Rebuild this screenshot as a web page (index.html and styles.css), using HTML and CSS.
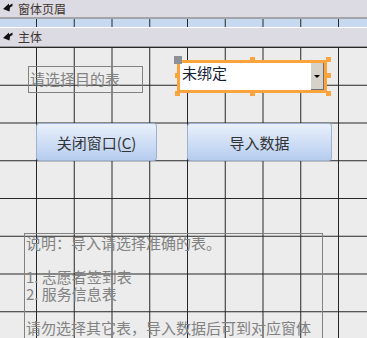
FILE: index.html
```html
<!doctype html>
<html lang="zh-CN">
<head>
<meta charset="utf-8" />
<title>窗体设计</title>
<link rel="stylesheet" href="styles.css">
</head>
<body>

<div class="form">

  <div class="bar bar-top">
    <svg class="arrow" width="10" height="9" viewBox="0 0 10 9"><path d="M0 6 L6 0.5 L6 2.5 L9.5 0.5 L9.5 3 L7 4.5 L6.5 8.5 Z" fill="#111"/></svg>
    <span>窗体页眉</span>
  </div>

  <div class="strip"></div>

  <div class="bar bar-detail">
    <svg class="arrow" width="10" height="9" viewBox="0 0 10 9"><path d="M0 6 L6 0.5 L6 2.5 L9.5 0.5 L9.5 3 L7 4.5 L6.5 8.5 Z" fill="#111"/></svg>
    <span>主体</span>
  </div>

  <div class="canvas">

    <div class="label pick">请选择目的表</div>

    <div class="combo">
      <div class="combo-text">未绑定</div>
      <div class="combo-btn"><span class="tri"></span></div>
    </div>
    <div class="grip move"></div>
    <div class="grip h-tm"></div>
    <div class="grip h-tr"></div>
    <div class="grip h-mr"></div>
    <div class="grip h-br"></div>
    <div class="grip h-bm"></div>
    <div class="grip h-bl"></div>
    <div class="grip h-ml"></div>

    <div class="btn close">关闭窗口(<u>C</u>)</div>
    <div class="btn import">导入数据</div>

    <div class="label note">说明：导入请选择准确的表。<br><br>1. 志愿者签到表<br>2. 服务信息表<br><br>请勿选择其它表，导入数据后可到对应窗体进行修改。</div>

  </div>
</div>

</body>
</html>
```

FILE: styles.css
```css
html,body{margin:0;padding:0}
body{width:367px;height:338px;overflow:hidden;background:#ececec;font-family:"Noto Sans CJK SC","Noto Sans",sans-serif}

.form{display:flex;flex-direction:column;height:338px}

.bar{display:flex;align-items:center;gap:5px;padding-left:3px;background:#dcdae3;color:#40372f;font-size:12px;flex-shrink:0}
.bar span{line-height:1}
.bar-top{height:17px;border-bottom:2px solid #a4a4a8}
.bar-detail{height:18px;border-bottom:1px solid #9c9c9c}
.arrow{display:block;margin-top:-2px}

.strip{height:8px;border-bottom:1px solid #fff;flex-shrink:0;
  background-color:#c6d9f0;
  background-image:linear-gradient(to right,#262626 1px,transparent 1px);
  background-size:37.75px 100%;
  background-position:36px 0}

.canvas{position:relative;flex:1;overflow:hidden;
  background-color:#ececec;
  background-image:linear-gradient(to right,#262626 1px,transparent 1px),linear-gradient(to bottom,#262626 1px,transparent 1px);
  background-size:37.75px 37.75px,37.75px 37.75px;
  background-position:36px 0,0 0}

/* controls sit on the design surface at their own coordinates */
.label{position:absolute;box-sizing:border-box;border:1px solid #828282;color:#828282;font-size:15px;line-height:17px;padding:0 1px}
.pick{left:28px;top:19px;width:115px;height:27px;padding-top:3px}
.note{left:24px;top:186px;width:299px;height:160px;line-height:17px}

.combo{position:absolute;left:177px;top:13px;width:150px;height:33px;box-sizing:border-box;border:3px solid #f9a43c;background:#fff;display:flex}
.combo-text{flex:1;font-size:15px;color:#142238;line-height:18px;padding:1px 0 0 2px}
.combo-btn{width:12px;background:#d6d2ca;border-right:1px solid #707070;border-bottom:1px solid #707070;display:flex;align-items:center;justify-content:center}
.tri{width:0;height:0;border-left:3px solid transparent;border-right:3px solid transparent;border-top:3px solid #000;margin-top:1px}

.grip{position:absolute;width:5px;height:5px;background:#f9a43c}
.move{left:174px;top:9px;width:8px;height:8px;background:#8e9097}
.h-tm{left:250px;top:10px}
.h-tr{left:326px;top:10px}
.h-mr{left:326px;top:26px}
.h-br{left:326px;top:44px}
.h-bm{left:250px;top:44px}
.h-bl{left:175px;top:44px}
.h-ml{left:175px;top:26px}

.btn{position:absolute;top:76px;height:38px;box-sizing:border-box;border:1px solid #9db1d3;border-radius:3px;
  background:linear-gradient(to bottom,#e9f0fb,#b6cdef);
  color:#333;font-size:15px;display:flex;align-items:center;justify-content:center}
.btn u{text-underline-offset:2px}
.close{left:36px;width:121px}
.import{left:187px;width:145px}
```
